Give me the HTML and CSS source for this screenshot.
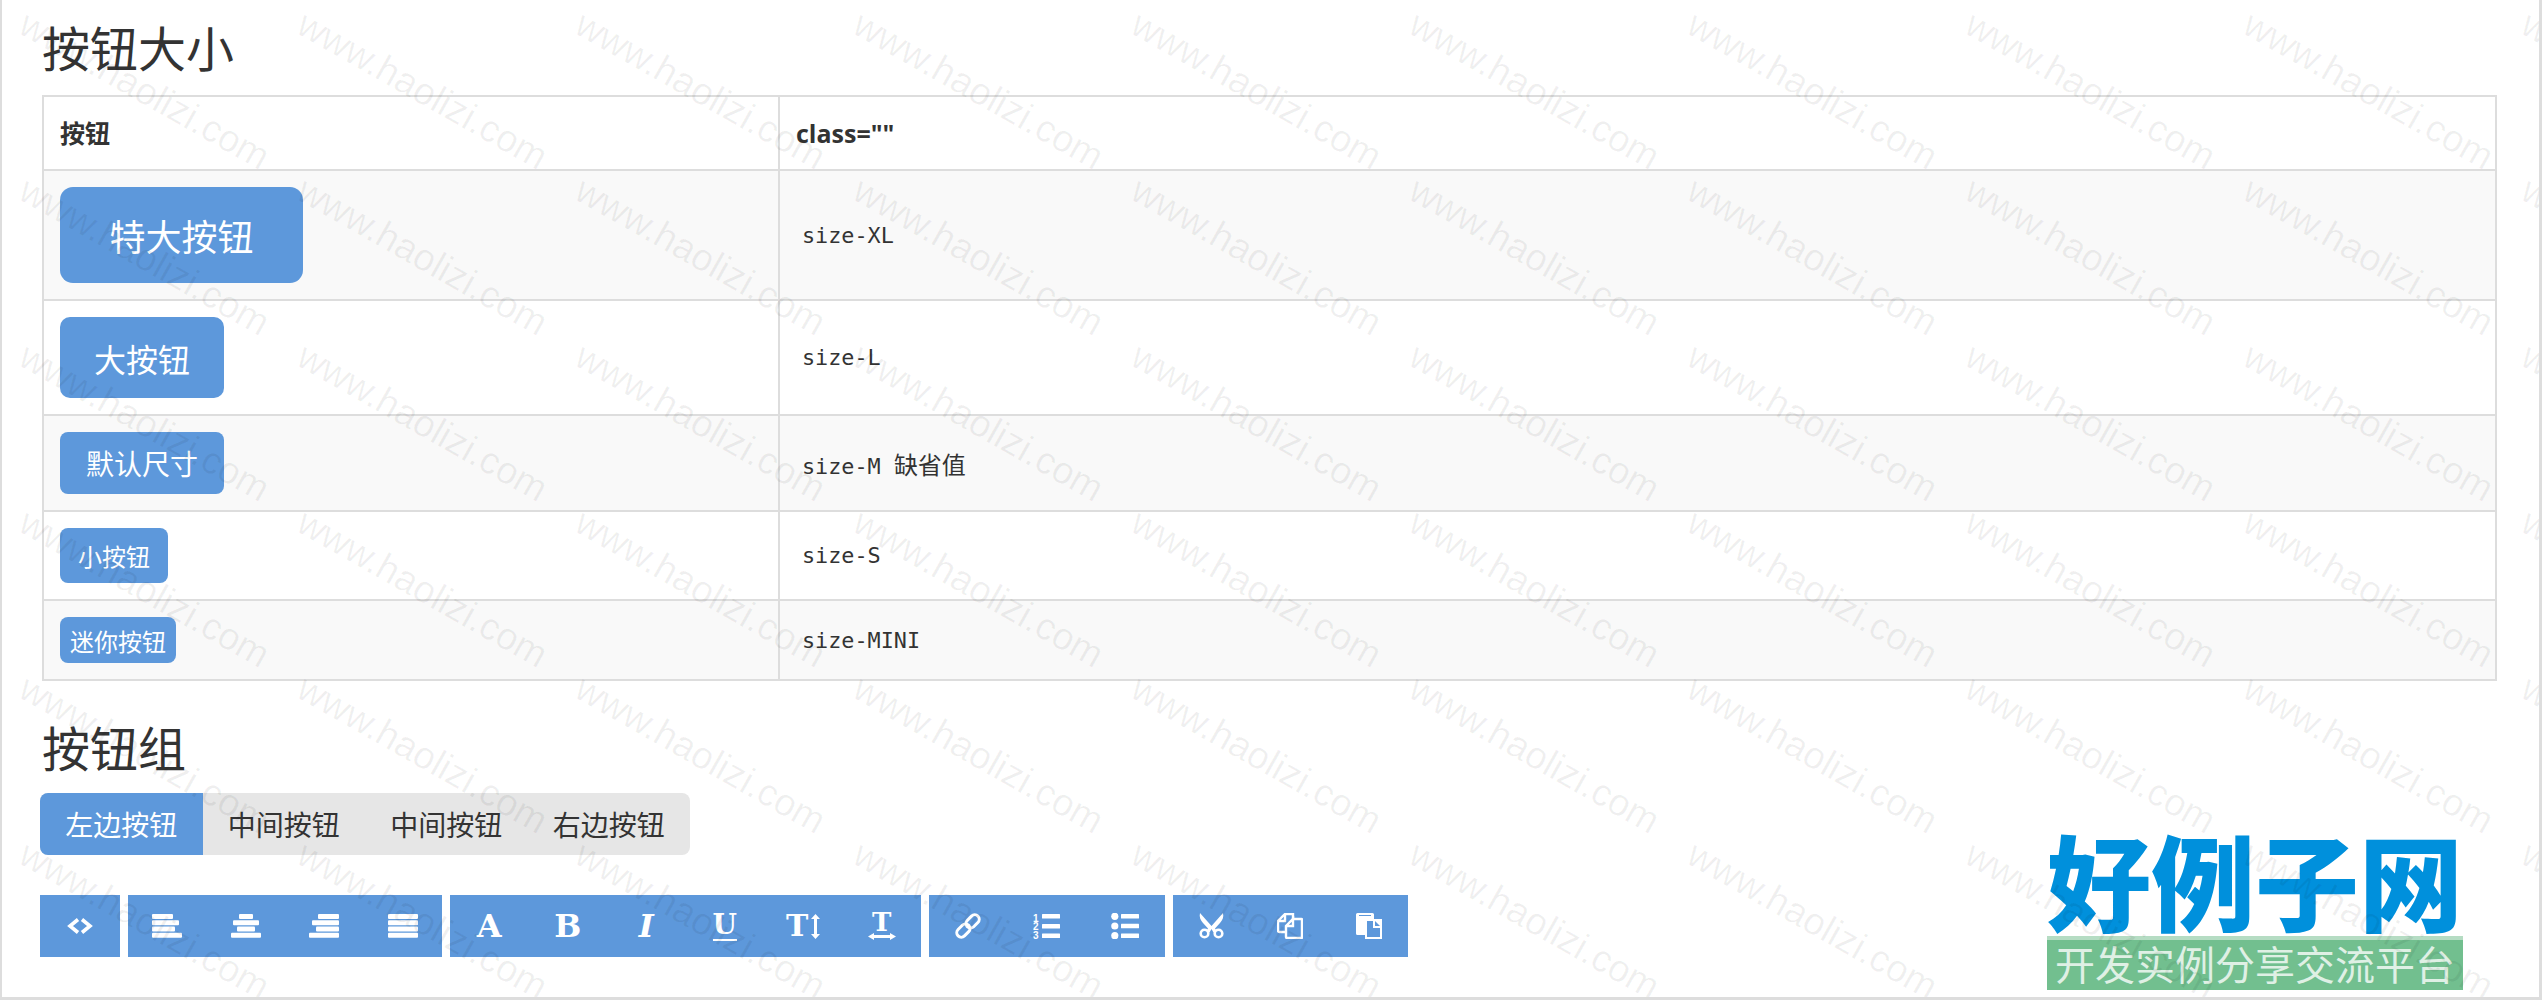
FILE: index.html
```html
<!DOCTYPE html>
<html lang="en">
<head>
<meta charset="UTF-8">
<title>按钮大小</title>
<link rel="stylesheet" href="styles.css">
</head>
<body>
    <div class="page">
        <h2 class="section-title">按钮大小</h2>
        <table class="size-table">
            <thead>
                <tr><th class="col-btn">按钮</th><th>class=""</th></tr>
            </thead>
            <tbody>
                <tr><td><a class="btn size-XL">特大按钮</a></td><td><code>size-XL</code></td></tr>
                <tr><td><a class="btn size-L">大按钮</a></td><td><code>size-L</code></td></tr>
                <tr><td><a class="btn size-M">默认尺寸</a></td><td><code>size-M <span class="code-note">缺省值</span></code></td></tr>
                <tr><td><a class="btn size-S">小按钮</a></td><td><code>size-S</code></td></tr>
                <tr><td><a class="btn size-MINI">迷你按钮</a></td><td><code>size-MINI</code></td></tr>
            </tbody>
        </table>

        <h2 class="section-title group-title">按钮组</h2>
        <div class="btn-group">
            <a class="group-item active">左边按钮</a>
            <a class="group-item">中间按钮</a>
            <a class="group-item">中间按钮</a>
            <a class="group-item">右边按钮</a>
        </div>

        <!-- Editor toolbar -->
        <div class="toolbar">
            <div class="tool-group">
                <a class="tool tool-wide"><svg width="26" height="16" viewBox="0 0 26 16"><path d="M11 1.500 3 8l8 6.500M15 1.500 23 8l-8 6.500" fill="none" stroke="#fff" stroke-width="3.600"/></svg></a>
            </div>
            <div class="tool-group">
                <a class="tool"><svg width="30" height="24" viewBox="0 0 30 24" fill="#fff"><rect x="0" y="0" width="21" height="5" rx="1"/><rect x="0" y="6.300" width="27" height="5" rx="1"/><rect x="0" y="12.500" width="23" height="5" rx="1"/><rect x="0" y="18.800" width="30" height="5" rx="1"/></svg></a>
                <a class="tool"><svg width="30" height="24" viewBox="0 0 30 24" fill="#fff"><rect x="8" y="0" width="14" height="5" rx="1"/><rect x="2" y="6.300" width="26" height="5" rx="1"/><rect x="6" y="12.500" width="18" height="5" rx="1"/><rect x="0" y="18.800" width="30" height="5" rx="1"/></svg></a>
                <a class="tool"><svg width="30" height="24" viewBox="0 0 30 24" fill="#fff"><rect x="9" y="0" width="21" height="5" rx="1"/><rect x="3" y="6.300" width="27" height="5" rx="1"/><rect x="7" y="12.500" width="23" height="5" rx="1"/><rect x="0" y="18.800" width="30" height="5" rx="1"/></svg></a>
                <a class="tool"><svg width="30" height="24" viewBox="0 0 30 24" fill="#fff"><rect x="0" y="0" width="30" height="5" rx="1"/><rect x="0" y="6.300" width="30" height="5" rx="1"/><rect x="0" y="12.500" width="30" height="5" rx="1"/><rect x="0" y="18.800" width="30" height="5" rx="1"/></svg></a>
            </div>
            <div class="tool-group">
                <a class="tool glyph">A</a>
                <a class="tool glyph">B</a>
                <a class="tool glyph glyph-italic">I</a>
                <a class="tool glyph"><span class="glyph-under">U</span></a>
                <a class="tool glyph"><span class="glyph-small">T</span><svg class="arrow-v" width="9" height="25" viewBox="0 0 9 25"><path d="M4.500 0 9 5H6v15h3l-4.500 5L0 20h3V5H0z" fill="#fff"/></svg></a>
                <a class="tool glyph"><span class="glyph-stack"><span class="glyph-wide">T</span><svg width="28" height="7" viewBox="0 0 28 7"><path d="M0 3.500 6 0v2h16V0l6 3.500L22 7V5H6v2z" fill="#fff"/></svg></span></a>
            </div>
            <div class="tool-group">
                <a class="tool"><svg width="26" height="26" viewBox="0 0 26 26"><g transform="rotate(-45 13 13)" fill="none" stroke="#fff" stroke-width="3"><rect x="-1" y="8.500" width="15" height="9" rx="4.500"/><rect x="12" y="8.500" width="15" height="9" rx="4.500"/></g></svg></a>
                <a class="tool"><svg width="27" height="26" viewBox="0 0 27 26" fill="#fff"><text x="0" y="8.500" class="ol-num">1</text><text x="0" y="17" class="ol-num">2</text><text x="0" y="25.500" class="ol-num">3</text><rect x="9" y="1" width="18" height="4.500" rx=".5"/><rect x="9" y="11" width="18" height="4.500" rx=".5"/><rect x="9" y="20.500" width="18" height="4.500" rx=".5"/></svg></a>
                <a class="tool"><svg width="28" height="26" viewBox="0 0 28 26" fill="#fff"><circle cx="3.800" cy="3.300" r="3.600"/><circle cx="3.800" cy="13" r="3.600"/><circle cx="3.800" cy="22.700" r="3.600"/><rect x="10" y="1" width="18" height="4.500" rx=".5"/><rect x="10" y="10.800" width="18" height="4.500" rx=".5"/><rect x="10" y="20.500" width="18" height="4.500" rx=".5"/></svg></a>
            </div>
            <div class="tool-group">
                <a class="tool"><svg width="25" height="26" viewBox="0 0 25 26"><path d="M1 0 12.500 13 24 0c1 4-.5 7-3 10l-5 5.500 1.500 2-3 2-2-3.500-2 3.500-3-2 1.500-2L4 10C1.500 7 0 4 1 0z" fill="#fff"/><circle cx="5.500" cy="20.500" r="3.800" fill="none" stroke="#fff" stroke-width="2.600"/><circle cx="19.500" cy="20.500" r="3.800" fill="none" stroke="#fff" stroke-width="2.600"/></svg></a>
                <a class="tool"><svg width="26" height="26" viewBox="0 0 26 26" fill="none" stroke="#fff" stroke-width="2.400"><path d="M9 19H2.500A1.500 1.500 0 0 1 1 17.500V8L8 1h8v5"/><path d="M8 1v7H1"/><path d="M16 6h8.500a.5.500 0 0 1 .5.500V24.500a.5.500 0 0 1-.5.500H10a1 1 0 0 1-1-1V13l7-7v7H9"/></svg></a>
                <a class="tool"><svg width="26" height="26" viewBox="0 0 26 26"><path d="M1.500 0h15A1.500 1.500 0 0 1 18 1.500V6h8v20H9v-4H1.500A1.500 1.500 0 0 1 0 20.500v-19A1.500 1.500 0 0 1 1.500 0z" fill="#fff"/><path d="M11 8h6v7h7v9H11z" fill="#5d98db"/><path d="M19 8l5 5h-5z" fill="#5d98db"/><rect x="3" y="2" width="12" height="1" fill="#5d98db"/></svg></a>
            </div>
        </div>

        <!-- Site logo stamped on the screenshot -->
        <div class="logo">
            <div class="logo-name">好例子网</div>
            <div class="logo-sub">开发实例分享交流平台</div>
        </div>

        <!-- Watermark -->
        <div class="watermark">
            <span>www.haolizi.com</span><span>www.haolizi.com</span><span>www.haolizi.com</span><span>www.haolizi.com</span><span>www.haolizi.com</span><span>www.haolizi.com</span><span>www.haolizi.com</span><span>www.haolizi.com</span><span>www.haolizi.com</span><span>www.haolizi.com</span>
            <span>www.haolizi.com</span><span>www.haolizi.com</span><span>www.haolizi.com</span><span>www.haolizi.com</span><span>www.haolizi.com</span><span>www.haolizi.com</span><span>www.haolizi.com</span><span>www.haolizi.com</span><span>www.haolizi.com</span><span>www.haolizi.com</span>
            <span>www.haolizi.com</span><span>www.haolizi.com</span><span>www.haolizi.com</span><span>www.haolizi.com</span><span>www.haolizi.com</span><span>www.haolizi.com</span><span>www.haolizi.com</span><span>www.haolizi.com</span><span>www.haolizi.com</span><span>www.haolizi.com</span>
            <span>www.haolizi.com</span><span>www.haolizi.com</span><span>www.haolizi.com</span><span>www.haolizi.com</span><span>www.haolizi.com</span><span>www.haolizi.com</span><span>www.haolizi.com</span><span>www.haolizi.com</span><span>www.haolizi.com</span><span>www.haolizi.com</span>
            <span>www.haolizi.com</span><span>www.haolizi.com</span><span>www.haolizi.com</span><span>www.haolizi.com</span><span>www.haolizi.com</span><span>www.haolizi.com</span><span>www.haolizi.com</span><span>www.haolizi.com</span><span>www.haolizi.com</span><span>www.haolizi.com</span>
            <span>www.haolizi.com</span><span>www.haolizi.com</span><span>www.haolizi.com</span><span>www.haolizi.com</span><span>www.haolizi.com</span><span>www.haolizi.com</span><span>www.haolizi.com</span><span>www.haolizi.com</span><span>www.haolizi.com</span><span>www.haolizi.com</span>
        </div>
    </div>
</body>
</html>
```

FILE: styles.css
```css
/* Basic styling for the page */
body, html {
    height: 100%;
    margin: 0;
    background: #fff;
    color: #333;
    font-family: "Open Sans", "Noto Sans CJK SC", sans-serif;
}

.page {
    position: relative;
    box-sizing: border-box;
    height: 1000px;
    overflow: hidden;
    padding: 0 42px 0 38px;
    border: solid #ddd;
    border-width: 0 3px 3px 2px;
}

.section-title {
    margin: 17px 0 14px;
    font-size: 48px;
    font-weight: 400;
    line-height: 64px;
    padding-left: 2px;
}

.group-title {
    margin: 36px 0 12px;
}

/* Size table */
.size-table {
    width: 2455px;
    margin-left: 2px;
    border-collapse: collapse;
    table-layout: fixed;
}

.size-table th,
.size-table td {
    border: 2px solid #ddd;
    padding: 16px;
    text-align: left;
}

.size-table th {
    height: 40px;
    font-size: 25px;
    font-weight: 700;
    line-height: 40px;
}

.col-btn {
    width: 702px;
}

.size-table tbody tr:nth-child(odd) {
    background: #f9f9f9;
}

.size-table code {
    padding: 0 6px;
    font-family: "DejaVu Sans Mono", "Noto Sans CJK SC", monospace;
    font-size: 21.800px;
    color: #333;
}

.code-note {
    font-size: 24px;
}

/* Buttons */
.btn {
    display: flex;
    align-items: center;
    justify-content: center;
    width: fit-content;
    background: #5d98db;
    color: #fff;
    border-radius: 8px;
}

.size-XL { width: 243px; height: 96px; border-radius: 13px; font-size: 36px; }
.size-L { width: 164px; height: 81px; border-radius: 10px; font-size: 32px; }
.size-M { width: 164px; height: 62px; font-size: 28px; }
.size-S { width: 108px; height: 55px; font-size: 24px; }
.size-MINI { width: 116px; height: 46px; font-size: 24px; }

/* Button group */
.btn-group {
    display: flex;
    width: 650px;
    height: 62px;
    background: #e6e6e6;
    border-radius: 8px;
    overflow: hidden;
}

.group-item {
    flex: 1;
    display: flex;
    align-items: center;
    justify-content: center;
    font-size: 28px;
}

.group-item.active {
    background: #5d98db;
    color: #fff;
}

/* Toolbar */
.toolbar {
    display: flex;
    gap: 8px;
    margin-top: 40px;
}

.tool-group {
    display: flex;
    height: 62px;
    background: #5d98db;
}

.tool {
    display: flex;
    align-items: center;
    justify-content: center;
    width: 78.500px;
    color: #fff;
}

.tool-wide {
    width: 80px;
}

.glyph {
    gap: 3px;
    font-family: "DejaVu Serif", serif;
    font-size: 32px;
    font-weight: 700;
    line-height: 1;
}

.glyph-italic {
    font-style: italic;
}

.glyph-under {
    border-bottom: 2px solid #fff;
    font-size: 28px;
    line-height: 28px;
}

.glyph-small {
    font-size: 30px;
    line-height: 26px;
}

.glyph-wide {
    font-size: 26px;
    line-height: 21px;
}

.glyph-stack {
    display: flex;
    flex-direction: column;
    align-items: center;
}

.arrow-v {
    display: block;
}

.ol-num {
    font-family: "Liberation Sans", sans-serif;
    font-size: 10px;
    font-weight: 700;
}

/* Logo overlay */
.logo {
    position: absolute;
    left: 2045px;
    top: 824px;
    width: 416px;
}

.logo-name {
    font-family: "Noto Sans CJK SC", sans-serif;
    font-size: 104px;
    font-weight: 900;
    line-height: 110px;
    white-space: nowrap;
    color: #0090dc;
}

.logo-sub {
    height: 54px;
    margin-top: 2px;
    background: #72bf8f;
    border-top: 4px solid #b5dcc3;
    box-sizing: border-box;
    color: #dff0e5;
    font-size: 40px;
    line-height: 50px;
    text-align: center;
    white-space: nowrap;
}

/* Watermark overlay */
.watermark {
    position: absolute;
    left: 3px;
    top: 7px;
    display: grid;
    grid-template-columns: repeat(10, 278px);
    grid-auto-rows: 166px;
    place-items: center;
    pointer-events: none;
}

.watermark span {
    font-family: "Liberation Sans", sans-serif;
    font-size: 38px;
    white-space: nowrap;
    color: rgba(0, 0, 0, 0.06);
    transform: rotate(29.600deg);
}
```
